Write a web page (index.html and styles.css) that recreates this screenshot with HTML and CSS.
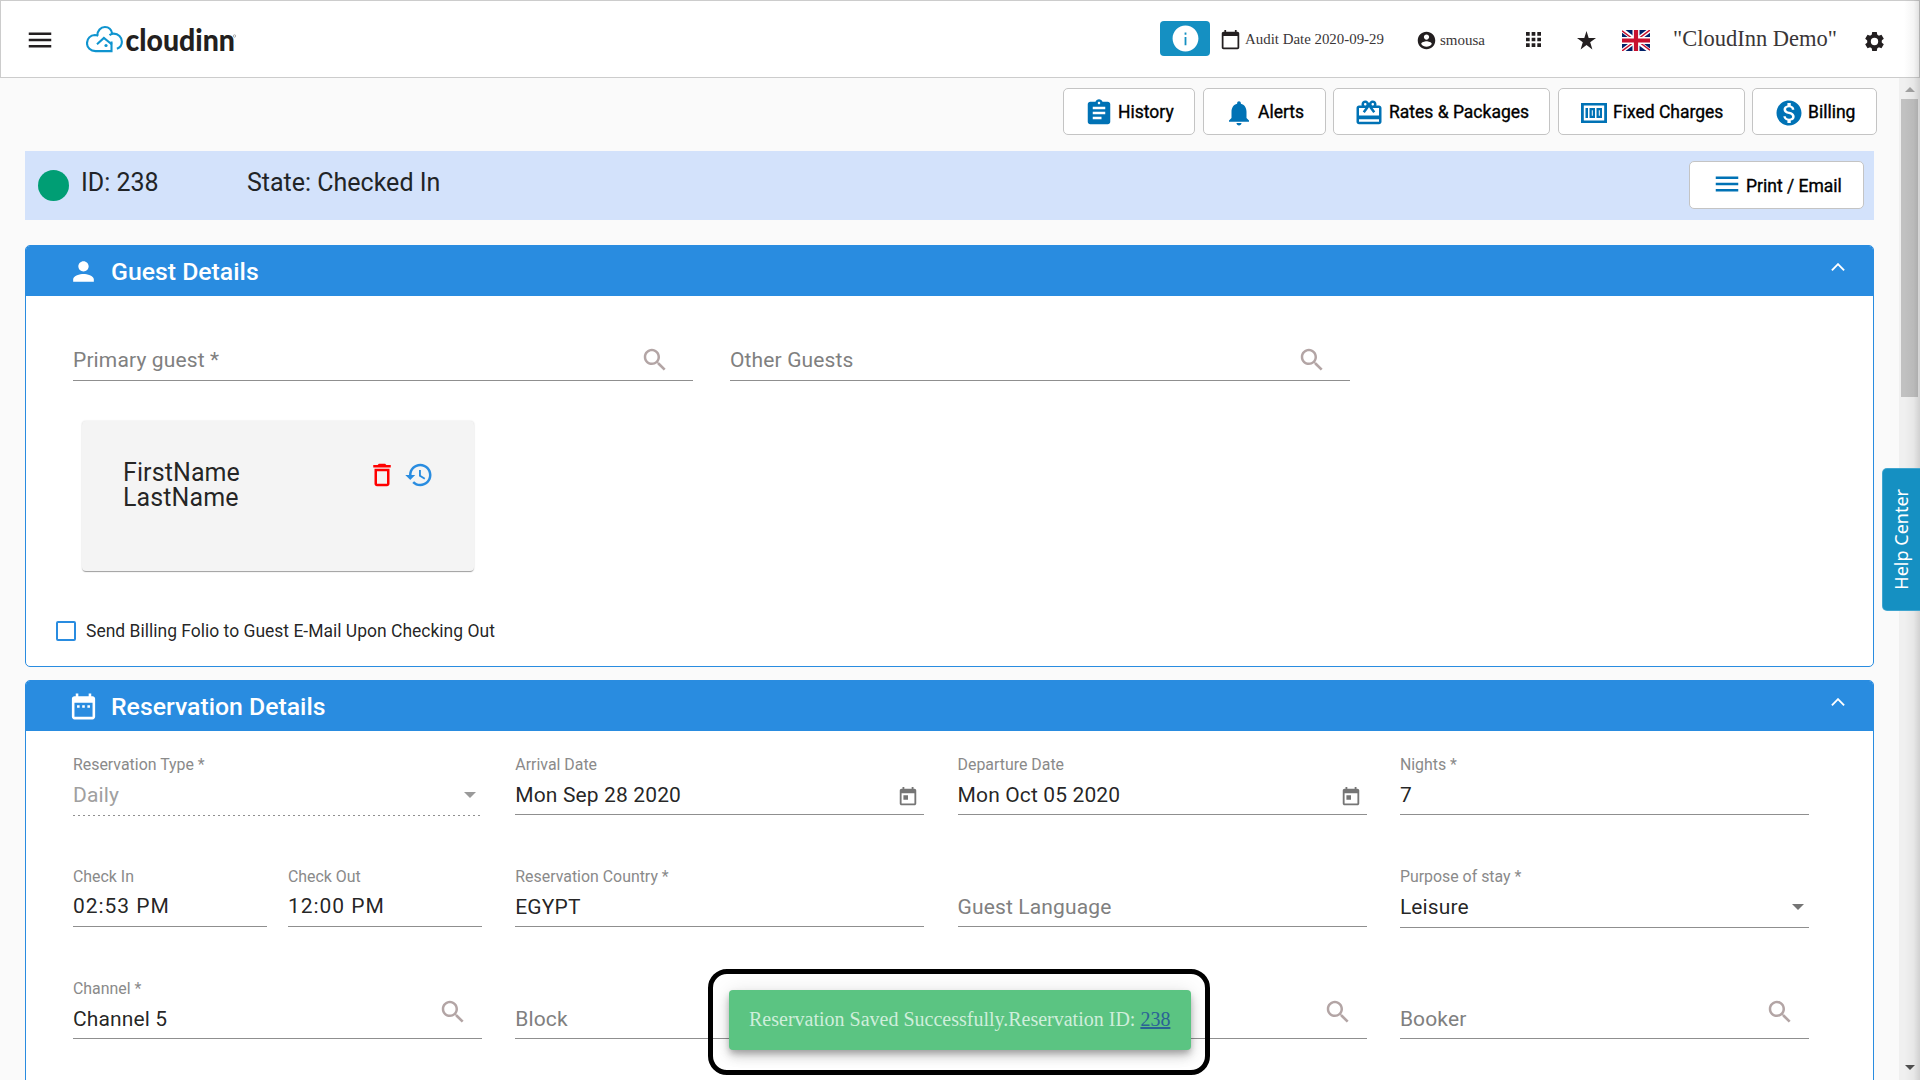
FILE: index.html
```html
<!DOCTYPE html>
<html lang="en">
<head>
<meta charset="utf-8">
<title>CloudInn - Reservation 238</title>
<link rel="stylesheet" href="styles.css">
</head>
<body>
<svg class="defs" width="0" height="0">
  <symbol id="search" viewBox="0 0 24 24"><path d="M15.5 14h-.79l-.28-.27C15.41 12.59 16 11.11 16 9.5 16 5.91 13.09 3 9.5 3S3 5.91 3 9.5 5.91 16 9.5 16c1.61 0 3.09-.59 4.23-1.57l.27.28v.79l5 4.99L20.49 19l-4.99-5zm-6 0C7.01 14 5 11.99 5 9.5S7.01 5 9.5 5 14 7.01 14 9.5 11.99 14 9.5 14z"/></symbol>
  <symbol id="menu" viewBox="0 0 24 24"><path d="M3 18h18v-2H3v2zm0-5h18v-2H3v2zm0-7v2h18V6H3z"/></symbol>
  <symbol id="today" viewBox="0 0 24 24"><path d="M19 3h-1V1h-2v2H8V1H6v2H5c-1.11 0-1.99.9-1.99 2L3 19c0 1.1.89 2 2 2h14c1.1 0 2-.9 2-2V5c0-1.1-.9-2-2-2zm0 16H5V8h14v11zM7 10h5v5H7z"/></symbol>
  <symbol id="expand-less" viewBox="0 0 14 8"><path d="M.9 7.3 7 1.2l6.100 6.100" fill="none" stroke="#fff" stroke-width="1.900"/></symbol>
</svg>

<header class="topbar">
  <svg class="menu-btn" width="30" height="30"><use href="#menu"/></svg>
  <svg class="logo" width="152" height="40" viewBox="0 -5 152 40">
    <g fill="none" stroke="#0f94cf" stroke-width="2.100">
      <path d="M25.500 15.500V25.100H9.500C4.500 25.100 1 21.600 1 17.200 1 12.500 4.500 9.100 8.800 9c1.200 0 2.400.3 3.400.8"/>
      <path d="M11.300 9.500C11.400 4.800 14.600 1 18.900 1c4 0 6.600 2.600 7.300 6.700"/>
      <path d="M23.500 9.100c1.400-1 2.700-1.500 4.200-1.500 4.600 0 8.200 3.400 8.200 8.100 0 3.100-1.900 5.800-5 7"/>
      <path d="m11 18.200 6.900-6.200 8 6.500"/>
    </g>
    <circle cx="20" cy="19.500" r="1.600" fill="#0f94cf"/>
    <text x="39.500" y="25" textLength="109.500" lengthAdjust="spacingAndGlyphs" class="logo-text">cloudinn</text>
    <circle cx="148.500" cy="10" r="1.200" fill="none" stroke="#999" stroke-width=".8"/>
  </svg>
  <div class="spacer"></div>
  <div class="info-btn">
    <svg width="31" height="31" viewBox="0 0 24 24" fill="#fff"><path d="M12 2C6.480 2 2 6.480 2 12s4.480 10 10 10 10-4.480 10-10S17.520 2 12 2zm.7 15.200h-1.400V10.800h1.400v6.400zm0-8.200h-1.400V7.300h1.400V9z"/></svg>
  </div>
  <svg class="audit-icon" width="21" height="21" viewBox="0 0 24 24"><path d="M20 3h-1V1h-2v2H7V1H5v2H4c-1.100 0-2 .9-2 2v16c0 1.100.9 2 2 2h16c1.100 0 2-.9 2-2V5c0-1.100-.9-2-2-2zm0 18H4V8h16v13z"/></svg>
  <span class="audit">Audit Date 2020-09-29</span>
  <svg class="user-icon" width="21" height="21" viewBox="0 0 24 24"><path d="M12 2C6.480 2 2 6.480 2 12s4.480 10 10 10 10-4.480 10-10S17.520 2 12 2zm0 3c1.660 0 3 1.340 3 3s-1.340 3-3 3-3-1.340-3-3 1.340-3 3-3zm0 14.200c-2.500 0-4.710-1.280-6-3.220.03-1.990 4-3.080 6-3.080 1.990 0 5.970 1.090 6 3.080-1.290 1.940-3.500 3.220-6 3.220z"/></svg>
  <span class="user">smousa</span>
  <svg class="apps" width="15" height="15" viewBox="0 0 15 15"><path d="M0 0h3.700v3.700H0zM5.650 0h3.700v3.700h-3.700zM11.300 0H15v3.700h-3.700zM0 5.650h3.700v3.700H0zM5.650 5.650h3.700v3.700h-3.700zM11.300 5.650H15v3.700h-3.700zM0 11.300h3.700V15H0zM5.650 11.300h3.700V15h-3.700zM11.300 11.300H15V15h-3.700z"/></svg>
  <svg class="star" width="19" height="19" viewBox="0 0 19 19"><path d="m9.500 0 2.200 7H19l-5.800 4.300 2.200 7.200-5.900-4.400-5.900 4.400 2.200-7.200L0 7h7.300z"/></svg>
  <svg class="flag" width="28" height="21" viewBox="0 0 28 21">
    <path fill="#012169" d="M0 0h28v21H0z"/>
    <path stroke="#fff" stroke-width="4.200" d="m0 0 28 21M28 0 0 21"/>
    <path stroke="#c8102e" stroke-width="1.500" d="m0 .8 13 9.700M15 10.500 28 20.200M28 0 14 10.500M14 10.500 0 21"/>
    <path stroke="#fff" stroke-width="7" d="M14 0v21M0 10.500h28"/>
    <path stroke="#c8102e" stroke-width="4.200" d="M14 0v21M0 10.500h28"/>
  </svg>
  <span class="hotel">"CloudInn Demo"</span>
  <svg class="gear" width="19" height="19" viewBox="0 0 19 19"><g transform="translate(9.500 9.500)"><circle r="5.500" fill="none" stroke="#231f20" stroke-width="3.600"/><g id="teeth"><path id="tooth" d="M-2.300-9.400h4.600l.6 3.500h-5.800z"/><use href="#tooth" transform="rotate(60)"/><use href="#tooth" transform="rotate(120)"/></g><use href="#teeth" transform="rotate(180)"/></g></svg>
</header>

<div class="page">
  <main class="content">
    <nav class="actions">
      <button class="btn history"><svg width="30" height="30" viewBox="0 0 24 24"><path d="M19 3h-4.180C14.400 1.840 13.300 1 12 1c-1.300 0-2.400.84-2.820 2H5c-1.100 0-2 .9-2 2v14c0 1.100.9 2 2 2h14c1.100 0 2-.9 2-2V5c0-1.100-.9-2-2-2zm-7 0c.55 0 1 .45 1 1s-.45 1-1 1-1-.45-1-1 .45-1 1-1zm2 14H7v-2h7v2zm3-4H7v-2h10v2zm0-4H7V7h10v2z"/></svg><span>History</span></button>
      <button class="btn alerts"><svg width="30" height="30" viewBox="0 0 24 24"><path d="M12 22c1.100 0 2-.9 2-2h-4c0 1.100.89 2 2 2zm6-6v-5c0-3.070-1.640-5.640-4.500-6.320V4c0-.83-.67-1.500-1.500-1.500s-1.500.67-1.500 1.500v.68C7.630 5.360 6 7.920 6 11v5l-2 2v1h16v-1l-2-2z"/></svg><span>Alerts</span></button>
      <button class="btn rates"><svg width="30" height="30" viewBox="0 0 24 24"><path d="M20 6h-2.180c.11-.31.18-.65.18-1 0-1.660-1.340-3-3-3-1.050 0-1.960.54-2.500 1.350l-.5.67-.5-.68C10.960 2.540 10.050 2 9 2 7.340 2 6 3.340 6 5c0 .35.070.69.180 1H4c-1.110 0-1.990.89-1.990 2L2 19c0 1.110.89 2 2 2h16c1.110 0 2-.89 2-2V8c0-1.110-.89-2-2-2zm-5-2c.55 0 1 .45 1 1s-.45 1-1 1-1-.45-1-1 .45-1 1-1zM9 4c.55 0 1 .45 1 1s-.45 1-1 1-1-.45-1-1 .45-1 1-1zm11 15H4v-2h16v2zm0-5H4V8h5.080L7 10.830 8.620 12 11 8.760l1-1.360 1 1.360L15.380 12 17 10.830 14.920 8H20v6z"/></svg><span>Rates &amp; Packages</span></button>
      <button class="btn fixed"><svg width="26" height="20" viewBox="0 0 26 20"><path fill-rule="evenodd" d="M0 0h26v20H0zM2.800 2.500v15h20.400v-15zM4.500 5H7v10H4.500zM8.500 5H14v10H8.500zM10.800 7.200v5.600h1V7.200zM15.500 5H21v10h-5.500zM17.800 7.200v5.600h1V7.200z"/></svg><span>Fixed Charges</span></button>
      <button class="btn billing"><svg width="30" height="30" viewBox="0 0 24 24"><path d="M12 2C6.480 2 2 6.480 2 12s4.480 10 10 10 10-4.480 10-10S17.520 2 12 2zm1.410 16.090V20h-2.670v-1.930c-1.710-.36-3.160-1.460-3.270-3.400h1.960c.1 1.050.82 1.870 2.650 1.870 1.960 0 2.400-.98 2.400-1.590 0-.83-.44-1.610-2.670-2.140-2.480-.6-4.180-1.620-4.180-3.670 0-1.720 1.390-2.840 3.110-3.210V4h2.670v1.950c1.860.45 2.790 1.860 2.850 3.390H14.300c-.05-1.110-.64-1.870-2.220-1.870-1.500 0-2.400.68-2.400 1.640 0 .84.65 1.390 2.670 1.910s4.180 1.390 4.180 3.910c-.01 1.830-1.380 2.830-3.120 3.160z"/></svg><span>Billing</span></button>
    </nav>

    <section class="status">
      <span class="dot"></span>
      <span class="res-id">ID: 238</span>
      <span class="state">State: Checked In</span>
      <button class="btn print"><svg width="30" height="30"><use href="#menu"/></svg><span>Print / Email</span></button>
    </section>

    <section class="panel guest">
      <h2 class="panel-head">
        <svg width="31" height="31" viewBox="0 0 24 24"><path d="M12 12c2.210 0 4-1.790 4-4s-1.790-4-4-4-4 1.790-4 4 1.790 4 4 4zm0 2c-2.670 0-8 1.340-8 4v2h16v-2c0-2.660-5.330-4-8-4z"/></svg>
        <span>Guest Details</span>
        <svg class="chevron" width="14" height="8"><use href="#expand-less"/></svg>
      </h2>
      <div class="guest-fields">
        <div class="field"><div class="value hint">Primary guest *<svg class="search" width="30" height="30"><use href="#search"/></svg></div></div>
        <div class="field"><div class="value hint">Other Guests<svg class="search" width="30" height="30"><use href="#search"/></svg></div></div>
      </div>
      <article class="guest-card">
        <div class="guest-name">FirstName<br>LastName</div>
        <svg class="trash" width="30" height="30" viewBox="0 0 24 24"><path d="M6 19c0 1.100.9 2 2 2h8c1.100 0 2-.9 2-2V7H6v12zM8 9h8v10H8V9zm7.500-5l-1-1h-5l-1 1H5v2h14V4z"/></svg>
        <svg class="past" width="30" height="30" viewBox="0 0 24 24"><path d="M13 3c-4.970 0-9 4.030-9 9H1l3.890 3.890.07.14L9 12H6c0-3.870 3.130-7 7-7s7 3.130 7 7-3.130 7-7 7c-1.930 0-3.680-.79-4.940-2.060l-1.420 1.420C8.270 19.990 10.510 21 13 21c4.970 0 9-4.030 9-9s-4.030-9-9-9zm-1 5v5l4.280 2.540.72-1.210-3.500-2.080V8H12z"/></svg>
      </article>
      <label class="check"><span class="box"></span>Send Billing Folio to Guest E-Mail Upon Checking Out</label>
    </section>

    <section class="panel reservation">
      <h2 class="panel-head">
        <svg width="31" height="31" viewBox="0 0 24 24"><path d="M9 11H7v2h2v-2zm4 0h-2v2h2v-2zm4 0h-2v2h2v-2zm2-7h-1V2h-2v2H8V2H6v2H5c-1.110 0-1.990.9-1.990 2L3 20c0 1.100.89 2 2 2h14c1.100 0 2-.9 2-2V6c0-1.100-.9-2-2-2zm0 16H5V9h14v11z"/></svg>
        <span>Reservation Details</span>
        <svg class="chevron" width="14" height="8"><use href="#expand-less"/></svg>
      </h2>
      <div class="grid">
        <div class="field disabled"><div class="label">Reservation Type *</div><div class="value">Daily<i class="arrow"></i></div></div>
        <div class="field"><div class="label">Arrival Date</div><div class="value">Mon Sep 28 2020<svg class="cal" width="22" height="22"><use href="#today"/></svg></div></div>
        <div class="field"><div class="label">Departure Date</div><div class="value">Mon Oct 05 2020<svg class="cal" width="22" height="22"><use href="#today"/></svg></div></div>
        <div class="field"><div class="label">Nights *</div><div class="value">7</div></div>

        <div class="times">
          <div class="field"><div class="label">Check In</div><div class="value time">02:53 PM</div></div>
          <div class="field"><div class="label">Check Out</div><div class="value time">12:00 PM</div></div>
        </div>
        <div class="field"><div class="label">Reservation Country *</div><div class="value">EGYPT</div></div>
        <div class="field"><div class="label"></div><div class="value hint">Guest Language</div></div>
        <div class="field select"><div class="label">Purpose of stay *</div><div class="value">Leisure<i class="arrow"></i></div></div>

        <div class="field"><div class="label">Channel *</div><div class="value">Channel 5<svg class="search" width="30" height="30"><use href="#search"/></svg></div></div>
        <div class="field"><div class="label"></div><div class="value hint">Block</div></div>
        <div class="field"><div class="label"></div><div class="value hint"><svg class="search" width="30" height="30"><use href="#search"/></svg></div></div>
        <div class="field"><div class="label"></div><div class="value hint">Booker<svg class="search" width="30" height="30"><use href="#search"/></svg></div></div>
      </div>
    </section>
  </main>

  <div class="scrollbar">
    <svg width="10" height="5" viewBox="0 0 10 5"><path fill="#a3a3a3" d="m0 5 5-5 5 5z"/></svg>
    <div class="thumb"></div>
    <svg width="10" height="5" viewBox="0 0 10 5"><path fill="#505050" d="m0 0 5 5 5-5z"/></svg>
  </div>
</div>

<div class="edge-shade"></div>
<div class="help"><span>Help Center</span></div>
<div class="callout"><div class="toast">Reservation Saved Successfully.Reservation ID:&nbsp;<a>238</a></div></div>
</body>
</html>
```
FILE: styles.css
```css
* { box-sizing: border-box; }
body {
  margin: 0; width: 1920px; height: 1080px; overflow: hidden;
  display: flex; flex-direction: column;
  background: #fafafa; color: rgba(0,0,0,.87);
  font-family: Roboto, sans-serif;
}
svg { display: block; flex: none; }
.defs { position: absolute; }

/* Top bar */
.topbar {
  height: 78px; flex: none; display: flex; align-items: flex-start;
  background: #fff; border: 1px solid #ccc; fill: #231f20; white-space: nowrap;
  font-family: "Liberation Serif", serif; font-size: 15px; line-height: 20px; color: #3a3637;
}
.menu-btn { margin: 24px 0 0 24px; }
.logo { margin: 20px 0 0 31px; }
.logo-text { font: 900 30px Lato, sans-serif; fill: #231f20; }
.spacer { flex: 1; }
.info-btn {
  width: 50px; height: 35px; margin: 20px 10px 0 0; border-radius: 4px; background: #1590c2;
  display: flex; align-items: center; justify-content: center;
}
.audit-icon { margin-top: 28px; }
.audit { margin: 28px 0 0 4px; width: 140px; font-size: 14.900px; }
.user-icon { margin: 29px 0 0 31px; }
.user { margin: 29px 0 0 3px; width: 45px; }
.apps { margin: 31px 0 0 41px; }
.star { margin: 30px 0 0 36px; }
.flag { margin: 29px 0 0 26px; }
.hotel { margin: 24px 0 0 23px; width: 163px; font-size: 22.500px; line-height: 28px; }
.gear { margin: 31px 35px 0 29px; }

/* Page */
.page { flex: 1; display: flex; min-height: 0; }
.content { width: 1899px; padding: 10px 25px 0 25px; overflow: hidden; }
.btn {
  height: 47px; padding: 0; display: flex; align-items: center; flex: none; white-space: nowrap;
  background: #fff; border: 1px solid #c4c4c4; border-radius: 5px;
  font: 17.500px Roboto, sans-serif; color: #000; fill: #0072b5;
}
.btn span { -webkit-text-stroke: .35px #000; }
.actions { display: flex; height: 63px; margin-right: -3px; justify-content: flex-end; }
.history { width: 132px; padding-left: 20px; margin-right: 8px; }
.history span { margin-left: 4px; }
.alerts { width: 123px; padding-left: 20px; margin-right: 7px; }
.alerts span { margin-left: 4px; }
.rates { width: 217px; padding-left: 20px; margin-right: 8px; }
.rates span { margin-left: 5px; }
.fixed { width: 187px; padding-left: 22px; margin-right: 7px; }
.fixed span { margin-left: 6px; }
.billing { width: 125px; padding-left: 21px; }
.billing span { margin-left: 4px; }
.btn svg { margin-top: 2px; }
.status {
  height: 69px; padding: 0 10px 0 13px; display: flex; align-items: center;
  background: #d3e2fb; font-size: 25px; line-height: 30px; color: #212427;
}
.dot { width: 31px; height: 31px; border-radius: 50%; background: #009e74; }
.res-id { width: 166px; margin: 0 0 5px 12px; }
.state { margin-bottom: 5px; }
.print { width: 175px; height: 48px; margin: -1px 0 0 auto; padding-left: 22px; }
.print svg { margin-top: -2px; }
.print span { margin: 1px 0 0 4px; }

/* Panels */
.panel { border: 1px solid #298ce0; border-radius: 5px; background: #fff; overflow: hidden; }
.panel-head {
  height: 50px; margin: 0; padding: 0 28px 0 42px; display: flex; align-items: center;
  background: #298ce0; color: #fff; fill: #fff; font-size: 24.800px; font-weight: 500;
}
.panel-head span { margin-left: 12px; }
.chevron { margin: -8px 0 0 auto; }
.guest { height: 422px; margin-top: 25px; }
.reservation { height: 500px; margin-top: 13px; }

/* Fields */
.field { border-bottom: 1px solid #8f8f8f; }
.label { height: 20px; margin: 1px 0 8px; font-size: 15.900px; line-height: 20px; color: #8a8a8a; }
.value {
  height: 31px; padding-bottom: 7px; display: flex; align-items: flex-start; white-space: nowrap;
  font-size: 21px; line-height: 24px; letter-spacing: .13px;
}
.hint { color: #808080; }
.time { letter-spacing: .95px; margin-top: -1px; height: 32px; }
.search { margin: -10px 14px -20px auto; fill: #b3a5a5; }
.cal { margin: 3px 5px 0 auto; fill: #757575; }
.arrow { margin: 9px 5px 0 auto; border: 6.500px solid transparent; border-top-color: #757575; border-bottom: 0; }
.disabled .value { color: #a0a0a0; }
.disabled .arrow { border-top-color: #9a9a9a; margin-right: 6px; }
.disabled {
  border: 0; margin-bottom: -1px; padding-bottom: 2px;
  background: repeating-linear-gradient(90deg, #8f8f8f 0 2px, transparent 2px 5px) 0 100% / 100% 1px no-repeat;
}
.select { margin-bottom: -1px; padding-bottom: 1px; }

.guest-fields { display: flex; gap: 37px; padding: 52px 0 0 47px; }
.guest-fields .value { height: 32px; }
.guest-fields .field { width: 620px; }
.guest-fields .search { margin: -3px 23px -20px auto; }
.guest-card {
  width: 392px; height: 150px; margin: 40px 0 0 56px; padding: 39px 0 0 41px; display: flex; align-items: flex-start;
  background: #f4f4f4; border-radius: 4px; box-shadow: 0 2px 1px -1px rgba(0,0,0,.25), 0 1px 1px rgba(0,0,0,.14), 0 0 2px rgba(0,0,0,.14);
}
.guest-name { width: 244px; font-size: 25px; line-height: 25px; letter-spacing: .1px; }
.trash { fill: #f00; }
.past { fill: #298ce0; margin-left: 7px; }
.check { margin: 48px 0 0 30px; display: flex; align-items: center; font-size: 17.500px; line-height: 24px; }
.box { width: 20px; height: 20px; margin-right: 10px; border: 2px solid #298ce0; border-radius: 2px; }

.grid { display: grid; grid-template-columns: repeat(4, 409px); column-gap: 33.300px; row-gap: 51px; padding: 23px 0 0 47px; }
.times { display: flex; gap: 21px; }
.times .field { width: 194px; }

/* Scrollbar */
.scrollbar {
  width: 21px; padding: 9px 2px 10px; display: flex; flex-direction: column; align-items: center; background: #f0f0f0;
}
.thumb { width: 17px; height: 298px; margin: 7px 0 auto; background: #c1c1c1; }

/* Overlays */
.edge-shade {
  position: absolute; top: 0; right: 0; width: 16px; height: 1080px;
  background: linear-gradient(90deg, rgba(0,0,0,0), rgba(0,0,0,.04) 60%, rgba(0,0,0,.13));
}
.help {
  position: absolute; right: 0; top: 468px; width: 38px; height: 143px; padding-right: 1px;
  display: flex; align-items: center; justify-content: center;
  background: #1590c2; border: 1px solid #3fa5cf; border-right: 0; border-radius: 5px 0 0 5px;
}
.help span { writing-mode: vertical-rl; transform: rotate(180deg); color: #fff; font: 18px "Noto Sans", sans-serif; white-space: nowrap; }
.callout {
  position: absolute; left: 708px; top: 969px; width: 502px; height: 106px; padding: 16px;
  border: 5px solid #000; border-radius: 19px;
}
.toast {
  width: 462px; height: 60px; padding: 0 0 1px 20px; display: flex; align-items: center; white-space: nowrap;
  background: #5bc482; border-radius: 4px; color: #cfeedb;
  font: 20px "Liberation Serif", serif;
  box-shadow: 0 4px 6px -1px rgba(0,0,0,.25), 0 7px 12px rgba(0,0,0,.14), 0 1px 20px rgba(0,0,0,.1);
}
.toast a { color: #2a6395; text-decoration: underline; }
```
